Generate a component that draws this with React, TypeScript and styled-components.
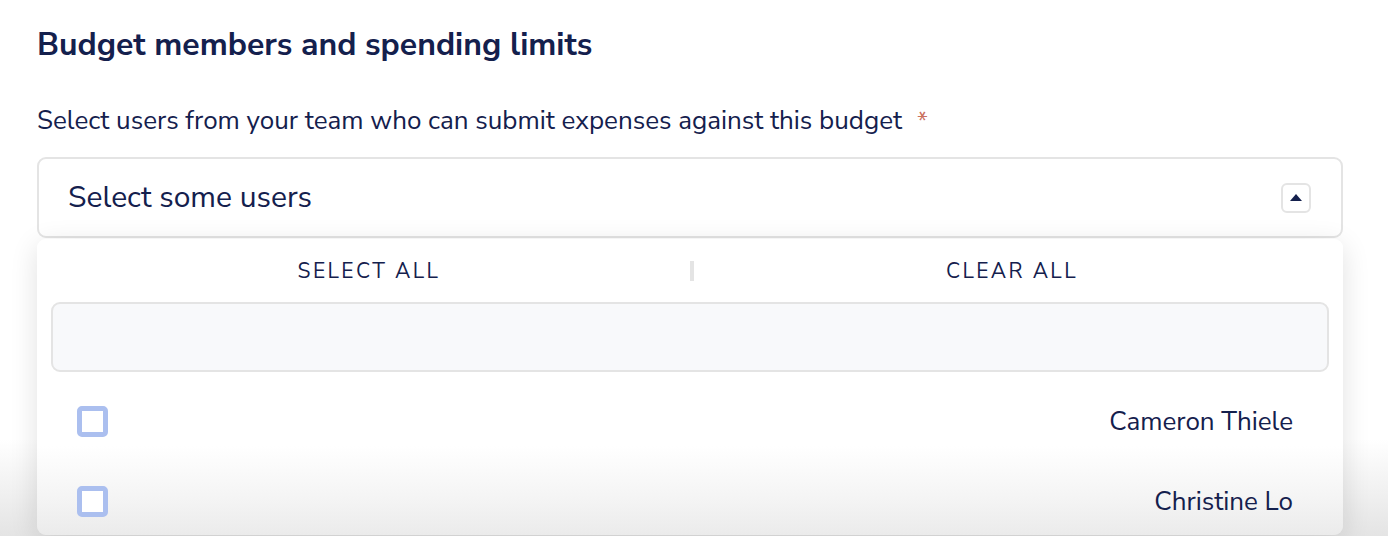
import React from "react";
import styled, { createGlobalStyle } from "styled-components";

const Global = createGlobalStyle`
  html, body { margin: 0; padding: 0; background: #ffffff; }
  body { font-family: "Nunito Sans", Lato, "Open Sans", sans-serif; color: #14204d; }
  * { box-sizing: border-box; }
`;

const Page = styled.div`
  width: 1388px;
  height: 536px;
  overflow: hidden;
  padding: 26px 45px 0 37px;
  background: linear-gradient(to bottom, #ffffff 0%, #ffffff 82%, #f0f0f0 92%, #e4e4e4 100%);
`;

const Title = styled.h2`
  margin: 0;
  font-size: 32px;
  font-weight: 700;
  line-height: 38px;
  color: #14204d;
`;

const Label = styled.div`
  margin-top: 42px;
  font-size: 26px;
  line-height: 30px;
  color: #14204d;
  display: flex;
  align-items: center;
`;

const Required = styled.span`
  color: #c9705f;
  margin-left: 15px;
  font-size: 24px;
`;

const Field = styled.div`
  margin-top: 21px;
  width: 1306px;
`;

const Control = styled.div`
  height: 81px;
  border: 2px solid #e4e4e4;
  border-radius: 9px;
  display: flex;
  align-items: center;
  justify-content: space-between;
  padding: 0 30px 0 29px;
  font-size: 30px;
  color: #14204d;
`;

const ArrowButton = styled.div`
  width: 30px;
  height: 30px;
  border: 2px solid #e4e4e4;
  border-radius: 6px;
  display: flex;
  align-items: center;
  justify-content: center;
`;

const Panel = styled.div`
  margin-top: 1px;
  border-radius: 9px;
  box-shadow: 0 6px 28px rgba(0, 0, 0, 0.12);
  padding: 0 14px;
  background: linear-gradient(to bottom, #ffffff 0%, #ffffff 70%, #f4f4f4 88%, #ebebeb 100%);
`;

const Actions = styled.div`
  height: 63px;
  display: grid;
  grid-template-columns: 636px 7px 636px;
  align-items: center;
`;

const ActionButton = styled.button`
  border: none;
  background: none;
  font-family: inherit;
  font-size: 21px;
  letter-spacing: 2.4px;
  text-transform: uppercase;
  color: #14204d;
  text-align: center;
  padding: 0;
  cursor: pointer;
`;

const Divider = styled.div`
  justify-self: end;
  width: 4px;
  height: 20px;
  background: #e4e4e4;
`;

const Search = styled.input`
  display: block;
  width: 100%;
  height: 70px;
  background: #f8f9fb;
  border: 2px solid #e4e4e4;
  border-radius: 9px;
  outline: none;
  font-family: inherit;
  font-size: 22px;
  padding: 0 20px;
`;

const List = styled.div`
  margin-top: 9px;
  max-height: 154px;
  overflow: hidden;
  display: flex;
  flex-direction: column;
`;

const Row = styled.div`
  flex: none;
  height: 80px;
  display: flex;
  align-items: center;
  justify-content: space-between;
  padding: 0 36px 0 26px;
`;

const Checkbox = styled.span`
  width: 31px;
  height: 31px;
  border: 5.5px solid #abbfef;
  border-radius: 5px;
  background: #ffffff;
`;

const Name = styled.span`
  font-size: 26px;
  color: #14204d;
`;

const users = ["Cameron Thiele", "Christine Lo"];

export default function App() {
  return (
    <Page>
      <Global />
      <Title>Budget members and spending limits</Title>
      <Label>
        Select users from your team who can submit expenses against this budget
        <Required>*</Required>
      </Label>
      <Field>
        <Control>
          <span>Select some users</span>
          <ArrowButton>
            <svg width="12" height="7" viewBox="0 0 12 7">
              <path d="M0 7 L6 0 L12 7 Z" fill="#14204d" />
            </svg>
          </ArrowButton>
        </Control>
        <Panel>
          <Actions>
            <ActionButton>Select all</ActionButton>
            <Divider />
            <ActionButton>Clear all</ActionButton>
          </Actions>
          <Search />
          <List>
            {users.map((u) => (
              <Row key={u}>
                <Checkbox />
                <Name>{u}</Name>
              </Row>
            ))}
          </List>
        </Panel>
      </Field>
    </Page>
  );
}
